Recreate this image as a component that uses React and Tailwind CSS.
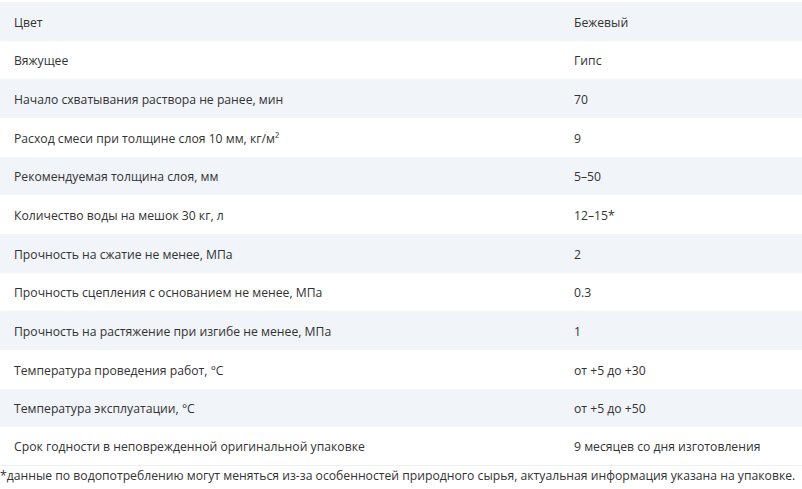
import React from "react";

const rows = [
  ["Цвет", "Бежевый"],
  ["Вяжущее", "Гипс"],
  ["Начало схватывания раствора не ранее, мин", "70"],
  ["Расход смеси при толщине слоя 10 мм, кг/м²", "9"],
  ["Рекомендуемая толщина слоя, мм", "5–50"],
  ["Количество воды на мешок 30 кг, л", "12–15*"],
  ["Прочность на сжатие не менее, МПа", "2"],
  ["Прочность сцепления с основанием не менее, МПа", "0.3"],
  ["Прочность на растяжение при изгибе не менее, МПа", "1"],
  ["Температура проведения работ, °С", "от +5 до +30"],
  ["Температура эксплуатации, °С", "от +5 до +50"],
  ["Срок годности в неповрежденной оригинальной упаковке", "9 месяцев со дня изготовления"],
];

function App() {
  return (
    <div
      className="w-[802px] h-[489px] bg-white text-[#333] text-[12.2px] overflow-hidden"
      style={{ fontFamily: '"Open Sans", "Noto Sans", sans-serif' }}
    >
      <div className="pt-[2px]">
        {rows.map(([name, value], i) => (
          <div
            key={name}
            className={`flex items-center h-[38.67px] pt-[3px] ${
              i % 2 === 0 ? "bg-[#f1f4f8]" : "bg-white"
            } ${i === rows.length - 1 ? "border-b border-[#eef0f3]" : ""}`}
          >
            <div className="w-[560px] pl-[14px] whitespace-nowrap">{name}</div>
            <div className="pl-[14px] whitespace-nowrap">{value}</div>
          </div>
        ))}
      </div>
      <p className="mt-[1px] leading-[18px] whitespace-nowrap">
        *данные по водопотреблению могут меняться из-за особенностей природного
        сырья, актуальная информация указана на упаковке.
      </p>
    </div>
  );
}

export default App;
